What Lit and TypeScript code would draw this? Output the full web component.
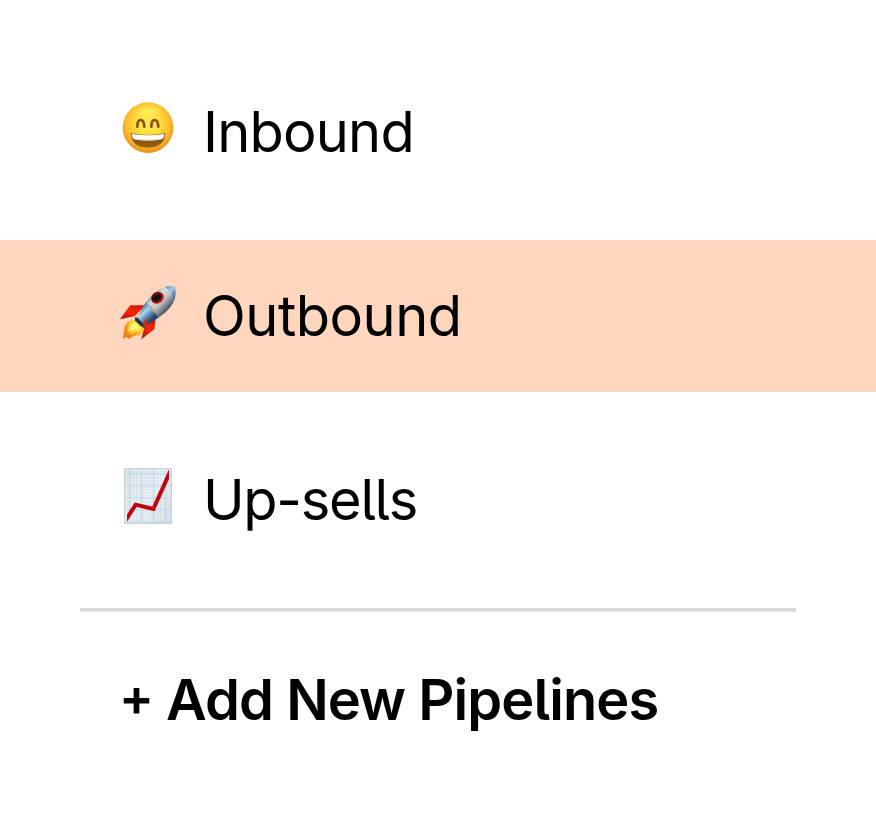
import { LitElement, html, css, svg } from "lit";
import { customElement } from "lit/decorators.js";

const smile = svg`
  <defs>
    <radialGradient id="face" cx=".5" cy=".42" r=".6">
      <stop offset="0" stop-color="#ffea50"/><stop offset=".4" stop-color="#ffdd3d"/>
      <stop offset=".72" stop-color="#fdba2c"/><stop offset="1" stop-color="#e5860f"/>
    </radialGradient>
    <linearGradient id="mouth" x1="0" y1="0" x2="0" y2="1">
      <stop offset="0" stop-color="#7a4a08"/><stop offset="1" stop-color="#94600c"/>
    </linearGradient>
    <radialGradient id="shine" cx=".5" cy=".5" r=".5">
      <stop offset="0" stop-color="#fff77a" stop-opacity=".8"/><stop offset="1" stop-color="#ffe94a" stop-opacity="0"/>
    </radialGradient>
  </defs>
  <circle cx="114" cy="107" r="76" fill="url(#face)"/>
  <ellipse cx="114" cy="58" rx="52" ry="26" fill="url(#shine)"/>
  <path d="M82 104C82 90 86 84 92 84s10 6 11 20M124 104c0-14 4-20 10-20s10 6 11 20" fill="none" stroke="#85500b" stroke-width="8" stroke-linecap="round"/>
  <path d="M62 124q52 10 104 0c-1 28-21 43-52 43s-51-15-52-43z" fill="url(#mouth)"/>
  <path d="M65 126q49 8 98 0c0 9-3 15-8 16q-41 7-82 0c-5-1-8-7-8-16z" fill="#fff"/>
  <path d="M69 137q45 8 90 0l-4 5q-41 7-82 0z" fill="#dfe4e8"/>`;

const rocket = svg`
  <defs>
    <linearGradient id="hull" gradientUnits="userSpaceOnUse" x1="112" y1="62" x2="160" y2="108">
      <stop offset="0" stop-color="#52769d"/><stop offset=".3" stop-color="#d5dce0"/>
      <stop offset=".62" stop-color="#c4c7c6"/><stop offset="1" stop-color="#596571"/>
    </linearGradient>
    <linearGradient id="lower" gradientUnits="userSpaceOnUse" x1="87" y1="96" x2="122" y2="132">
      <stop offset="0" stop-color="#3a608d"/><stop offset=".4" stop-color="#acd3ed"/>
      <stop offset=".7" stop-color="#608cbc"/><stop offset="1" stop-color="#274566"/>
    </linearGradient>
    <linearGradient id="nose" gradientUnits="userSpaceOnUse" x1="167" y1="31" x2="198" y2="65">
      <stop offset="0" stop-color="#5a84ad"/><stop offset=".4" stop-color="#a9cbe2"/><stop offset="1" stop-color="#28558b"/>
    </linearGradient>
    <linearGradient id="fin" x1="0" y1="1" x2="1" y2="0">
      <stop offset="0" stop-color="#a9120a"/><stop offset=".5" stop-color="#f42608"/><stop offset="1" stop-color="#c91307"/>
    </linearGradient>
    <radialGradient id="fire" cx=".6" cy=".38" r=".6">
      <stop offset="0" stop-color="#fff576"/><stop offset=".5" stop-color="#ffd32b"/><stop offset="1" stop-color="#ec7212"/>
    </radialGradient>
  </defs>
  <path d="M106 88L61 88Q53 98 30 130L75 120 90 104z" fill="url(#fin)"/>
  <path d="M137 127L133 160 94 190 104 151 120 132z" fill="url(#fin)"/>
  <path d="M76 130L52 138q-11 14-9 23l-4 26 11-5 8 7 10-8 17-3q17-10 19-29z" fill="url(#fire)"/>
  <path d="M77 137q-18 8-22 28 19 0 35-18z" fill="#fff36d"/>
  <path d="M51 151l-8 33 12-10M65 174l-8 13M80 168l-12 13" fill="none" stroke="#f28b16" stroke-width="4"/>
  <path d="M75 124l10 1 22 23-4 9-14-9-14-14z" fill="#26343e"/>
  <path d="M84 126Q91 100 107 80l40 44q-21 17-43 24z" fill="url(#lower)"/>
  <path d="M106 81q28-40 63-49 19 21 27 32-10 36-49 60z" fill="url(#hull)"/>
  <path d="M165 33q18-6 31-1 3 18-2 38-9-24-29-37z" fill="url(#nose)"/>
  <path d="M105 80q23 14 42 44" fill="none" stroke="#77838a" stroke-width="3"/>
  <path d="M129 105l10-4" stroke="#e1ad25" stroke-width="3"/>
  <path d="M107 127q-8 12-9 26l8-4 6-19z" fill="#ef2108"/>
  <ellipse cx="142" cy="65" rx="20" ry="17" transform="rotate(-35 142 65)" fill="#bc100d"/>
  <ellipse cx="140" cy="64" rx="15" ry="12" transform="rotate(-35 140 64)" fill="#160d10"/>
  <path d="M132 62q4-9 13-8" fill="none" stroke="#544347" stroke-width="3"/>`;

const chart = svg`
  <defs>
    <linearGradient id="paper" x1="0" y1="0" x2="1" y2="1">
      <stop offset="0" stop-color="#dbe5ed"/><stop offset=".5" stop-color="#f1f5f8"/><stop offset="1" stop-color="#dce0e4"/>
    </linearGradient>
    <pattern id="fine" width="9" height="9" patternUnits="userSpaceOnUse" x="43" y="25">
      <path d="M0 1.5h9M1.5 0v9" stroke="#cfdfea" stroke-width="2"/>
    </pattern>
    <pattern id="major" width="36" height="36" patternUnits="userSpaceOnUse" x="57" y="40">
      <path d="M0 1.5h36M1.5 0v36" stroke="#aacfe9" stroke-width="3"/>
    </pattern>
    <clipPath id="edge"><path d="M51 24h126v168H51z"/></clipPath>
  </defs>
  <path d="M42 24h144v168H42z" fill="url(#paper)"/>
  <path d="M42 24h144v168H42z" fill="url(#fine)"/>
  <path d="M42 24h144v168H42z" fill="url(#major)" opacity=".65"/>
  <path d="M43.5 25.5h141v165h-141z" fill="none" stroke="#c6d0d7" stroke-width="3"/>
  <path d="M46 182l31-48 53 13 54-120" fill="none" stroke="#c4000b" stroke-width="12" clip-path="url(#edge)"/>`;

const pipelines = [
  { id: "inbound", label: "Inbound", icon: smile, selected: false },
  { id: "outbound", label: "Outbound", icon: rocket, selected: true },
  { id: "upsells", label: "Up-sells", icon: chart, selected: false },
];

@customElement("app-root")
export class AppRoot extends LitElement {
  static styles = css`
    :host {
      display: block;
      box-sizing: border-box;
      min-height: 832px;
      padding-top: 56px;
      background: #fff;
      color: #000;
      font: 430 56px/72px Inter, "Liberation Sans", sans-serif;
      font-feature-settings: "cv05" 1;
    }
    .list { display: grid; gap: 32px; }
    .row {
      display: flex;
      box-sizing: border-box;
      height: 152px;
      padding: 36px 0 0 110px;
      gap: 17px;
    }
    .selected { background: #ffd6be; }
    .icon { width: 76px; height: 72px; flex: none; }
    .label { padding-top: 4px; white-space: nowrap; }
    .inbound { letter-spacing: -0.8px; }
    .outbound { letter-spacing: -0.5px; }
    .upsells { letter-spacing: -1.3px; }
    .divider {
      height: 4px;
      margin: 32px 80px 0;
      background: linear-gradient(#d9d9d9 3px, #e8e8e8 3px);
    }
    .add {
      display: flex;
      margin: 52px 0 0 119px;
      font-weight: 590;
      white-space: nowrap;
    }
    .plus { width: 47px; font-size: 52px; line-height: 67px; font-weight: 560; }
    .title { letter-spacing: -0.93px; }
  `;

  render() {
    return html`
      <div class="list">
        ${pipelines.map(
          (p) => html`
            <div class="row ${p.selected ? "selected" : ""}">
              <svg class="icon" viewBox="0 0 228 216" aria-hidden="true">${p.icon}</svg>
              <span class="label ${p.id}">${p.label}</span>
            </div>
          `
        )}
      </div>
      <div class="divider"></div>
      <div class="add"><span class="plus">+</span><span class="title">Add New Pipelines</span></div>
    `;
  }
}
